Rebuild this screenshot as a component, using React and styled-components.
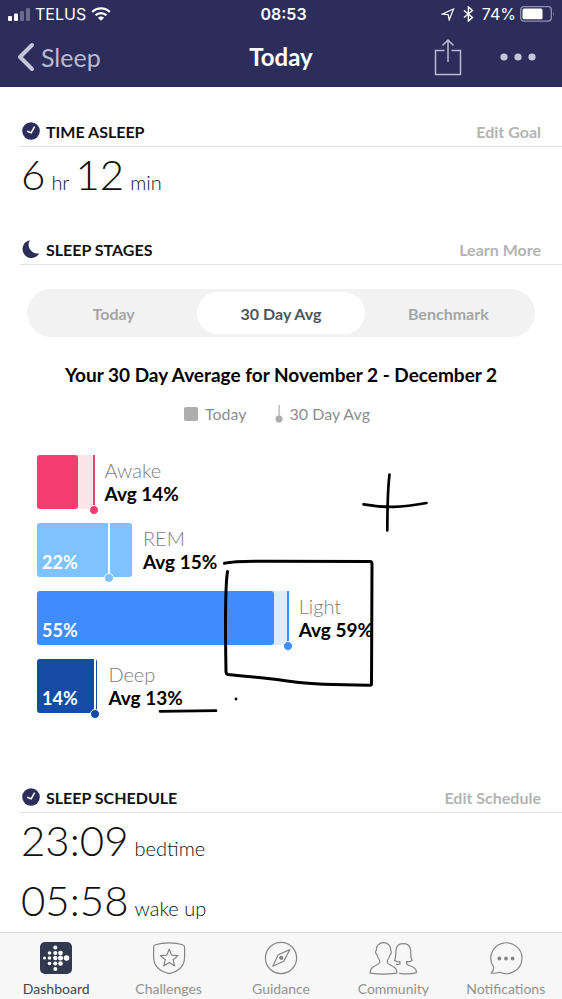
import React, { useState } from "react";
import styled, { createGlobalStyle } from "styled-components";

const stages = [
  { name: "Awake", today: 9.5, avg: 13.1, label: "", avgLabel: "Avg 14%", color: "#f23d6e", light: "#fde3ea" },
  { name: "REM", today: 22, avg: 16.6, label: "22%", avgLabel: "Avg 15%", color: "#7ec2ff", light: "#e2f1ff" },
  { name: "Light", today: 55, avg: 58.1, label: "55%", avgLabel: "Avg 59%", color: "#3f8cff", light: "#e1ebff" },
  { name: "Deep", today: 14, avg: 13.4, label: "14%", avgLabel: "Avg 13%", color: "#154aa6", light: "#dbe4f2" },
];

// share of the row that one percent of sleep takes
const SCALE = 0.884;

const tabs = ["Today", "30 Day Avg", "Benchmark"];

const ClockIcon = () => (
  <svg width="18" height="18" viewBox="0 0 18 18" aria-hidden="true">
    <circle cx="9" cy="9" r="8.8" fill="#2c2d5b" />
    <path d="M5 9.2 9.2 10.8 12.6 4.6" fill="none" stroke="#fff" strokeWidth="1.5" />
  </svg>
);

const MoonIcon = () => (
  <svg width="18" height="18" viewBox="0 0 18 18" aria-hidden="true">
    <path d="M8 .3A8.900 8.900 0 1 0 17.300 13.200 8.600 8.600 0 0 1 8 .3Z" fill="#2c2d5b" />
  </svg>
);

const DashboardIcon = () => (
  <svg width="48" height="34" viewBox="0 0 48 34" aria-hidden="true">
    <rect x="8" y="1" width="32" height="32" rx="5" fill="#30394d" />
    <g fill="#fff">
      <circle cx="12.500" cy="17" r="1.500" />
      <circle cx="17.500" cy="12" r="1.800" />
      <circle cx="17.500" cy="17" r="1.800" />
      <circle cx="17.500" cy="22.500" r="1.800" />
      <circle cx="23.300" cy="6.500" r="2" />
      <circle cx="23.300" cy="12" r="2.100" />
      <circle cx="23.300" cy="17" r="2.200" />
      <circle cx="23.300" cy="22.500" r="2.100" />
      <circle cx="23.300" cy="28" r="2" />
      <circle cx="28.500" cy="12" r="2.300" />
      <circle cx="28.500" cy="17" r="2.500" />
      <circle cx="28.500" cy="22.500" r="2.300" />
      <circle cx="34.500" cy="17" r="2.800" />
    </g>
  </svg>
);

const Outline = ({ children }) => (
  <svg
    width="48"
    height="34"
    viewBox="0 0 48 34"
    fill="none"
    stroke="#868686"
    strokeWidth="1.2"
    strokeLinejoin="round"
    strokeLinecap="round"
    aria-hidden="true"
  >
    {children}
  </svg>
);

const ChallengesIcon = () => (
  <Outline>
    <path d="M10.500 3.800C18 1.200 30 1.200 37.700 3.800 39 4.300 39.600 5.200 39.600 6.500V16C39.600 25 33 30.500 24.200 32.600 15.400 30.500 8.600 25 8.600 16V6.500C8.600 5.200 9.200 4.300 10.500 3.800Z" />
    <path d="M24.200 8.200 26.700 14.200 33 14.600 28.100 18.700 29.700 25 24.200 21.500 18.700 25 20.300 18.700 15.400 14.600 21.700 14.200Z" />
  </Outline>
);

const GuidanceIcon = () => (
  <Outline>
    <circle cx="24" cy="17" r="15.600" />
    <path d="M32.800 8.600 26.800 20.200 15.800 25.200 21.200 13.800Z" />
    <circle cx="24.200" cy="16.800" r="1.500" fill="#868686" />
  </Outline>
);

const CommunityIcon = () => (
  <Outline>
    <path d="M14.500 1.700C19 1.700 22 4.700 21.700 9.500 23 10 22.200 13.200 20.900 14 20.400 16.500 19.600 17.900 18.400 19.200V21.500C18.600 24.500 27.400 24.300 27.800 30.500V32.200C19 33.400 10 33.400 1.200 32.200V30.500C1.600 24.300 10.400 24.500 10.600 21.500V19.200C9.400 17.900 8.600 16.500 8.100 14 6.800 13.200 6 10 7.300 9.500 7 4.700 10 1.700 14.500 1.700Z" />
    <path d="M27.500 23.400C29 23.600 30.500 23.300 31 22.800V20.700C29 21 27 20.600 25.500 19.600 27.500 16 26.200 11 27.300 7.500 28.500 3.600 31 2.700 34.300 2.700S40.300 4 41.300 7.500C42.300 11 40.900 16 43 19.600 41.500 20.600 39.600 21 37.600 20.700V22.800C38.500 25 46.500 25 47.300 30V31.800C41.500 33.100 35.500 33 30.500 32.300" />
  </Outline>
);

const NotificationsIcon = () => (
  <Outline>
    <path d="M11.700 26.200A15.600 15.400 0 1 1 17.800 31.200C15.500 32.200 12.300 32.400 9.200 32.200 10.900 30.500 11.600 28.500 11.700 26.200Z" />
    <g fill="#868686" stroke="none">
      <circle cx="17.400" cy="17.500" r="1.900" />
      <circle cx="24" cy="17.500" r="1.900" />
      <circle cx="30.600" cy="17.500" r="1.900" />
    </g>
  </Outline>
);

const navItems = [
  { name: "Dashboard", Icon: DashboardIcon, active: true },
  { name: "Challenges", Icon: ChallengesIcon },
  { name: "Guidance", Icon: GuidanceIcon },
  { name: "Community", Icon: CommunityIcon },
  { name: "Notifications", Icon: NotificationsIcon },
];

const StatusBar = () => (
  <Status>
    <StatusGroup>
      <svg width="22" height="13" viewBox="0 0 22 13" fill="#fff" aria-hidden="true">
        <rect x="0" y="8" width="4" height="5" rx="1" />
        <rect x="6" y="5.500" width="4" height="7.500" rx="1" />
        <rect x="12" y="3" width="4" height="10" rx="1" opacity=".3" />
        <rect x="18" y="0" width="4" height="13" rx="1" opacity=".3" />
      </svg>
      TELUS
      <svg width="20" height="14" viewBox="0 0 20 14" fill="none" stroke="#fff" strokeWidth="2.300" aria-hidden="true">
        <path d="M1.200 5A12.400 12.400 0 0 1 18.800 5" />
        <path d="M4.500 8.300A7.800 7.800 0 0 1 15.500 8.300" />
        <path d="M10 13.800 6.900 10.700A4.400 4.400 0 0 1 13.100 10.700Z" fill="#fff" stroke="none" />
      </svg>
    </StatusGroup>
    <Time>08:53</Time>
    <StatusGroup $end>
      <svg width="14" height="13" viewBox="0 0 14 13" fill="none" stroke="#fff" strokeWidth="1.200" aria-hidden="true">
        <path d="M12.500 1 1.500 6 7.200 6.700 8.200 12Z" />
      </svg>
      <svg width="11" height="16" viewBox="0 0 11 16" fill="none" stroke="#fff" strokeWidth="1.400" aria-hidden="true">
        <path d="M1 4.500 9.500 11.500 5.400 15V1L9.500 4.500 1 11.500" />
      </svg>
      <Battery>
        74%
        <svg width="35" height="16" viewBox="0 0 35 16" aria-hidden="true">
          <rect x=".7" y=".7" width="30.600" height="14.400" rx="3" fill="none" stroke="#8f90ac" strokeWidth="1.300" />
          <rect x="2.500" y="2.500" width="20" height="10.800" rx="1.500" fill="#fff" />
          <path d="M33 5.500Q34.500 8 33 10.500Z" fill="#8f90ac" />
        </svg>
      </Battery>
    </StatusGroup>
  </Status>
);

const SectionHeader = ({ icon, title, action }) => (
  <SectionHead>
    {icon}
    <h2>{title}</h2>
    {action && <button type="button">{action}</button>}
  </SectionHead>
);

const StageRow = ({ stage }) => {
  const max = Math.max(stage.today, stage.avg);
  const over = stage.today > stage.avg;
  return (
    <Row>
      <Track $color={stage.light} style={{ width: `${max * SCALE}%` }}>
        <Fill $color={stage.color} style={{ width: `${(stage.today / max) * 100}%` }}>
          {stage.label}
        </Fill>
        <Marker
          $line={over ? "#fff" : stage.color}
          $dot={stage.color}
          style={{ left: `${(stage.avg / max) * 100}%` }}
        />
      </Track>
      <StageText>
        <span>{stage.name}</span>
        <strong>{stage.avgLabel}</strong>
      </StageText>
    </Row>
  );
};

const App = () => {
  const [tab, setTab] = useState("30 Day Avg");

  return (
    <Page>
      <GlobalStyle />
      <Header>
        <StatusBar />
        <NavBar>
          <BackButton type="button">
            <svg width="18" height="30" viewBox="0 0 18 30" fill="none" stroke="#c5c6dc" strokeWidth="4" strokeLinecap="round" strokeLinejoin="round" aria-hidden="true">
              <path d="M15 3 3 15 15 27" />
            </svg>
            Sleep
          </BackButton>
          <h1>Today</h1>
          <NavActions>
            <button type="button" aria-label="Share">
              <svg width="28" height="38" viewBox="0 0 28 38" fill="none" stroke="#b9bad3" strokeWidth="1.500" aria-hidden="true">
                <path d="M10.500 12.500H1.500V36.500H26.500V12.500H17.500M14 24V2M8.500 7.500 14 2 19.500 7.500" />
              </svg>
            </button>
            <button type="button" aria-label="More">
              <svg width="36" height="8" viewBox="0 0 36 8" fill="#c5c6dc" aria-hidden="true">
                <circle cx="4" cy="4" r="3.600" />
                <circle cx="18" cy="4" r="3.600" />
                <circle cx="32" cy="4" r="3.600" />
              </svg>
            </button>
          </NavActions>
        </NavBar>
      </Header>

      <Main>
        <Section>
          <SectionHeader icon={<ClockIcon />} title="TIME ASLEEP" action="Edit Goal" />
          <Value>
            <span>6</span>
            <small>hr</small>
            <span>12</span>
            <small>min</small>
          </Value>
        </Section>

        <Section>
          <SectionHeader icon={<MoonIcon />} title="SLEEP STAGES" action="Learn More" />
          <Tabs role="tablist">
            {tabs.map((name) => (
              <Tab
                key={name}
                type="button"
                role="tab"
                aria-selected={tab === name}
                $active={tab === name}
                onClick={() => setTab(name)}
              >
                {name}
              </Tab>
            ))}
          </Tabs>
          <ChartTitle>Your 30 Day Average for November 2 - December 2</ChartTitle>
          <Legend>
            <span>
              <Swatch />
              Today
            </span>
            <span>
              <svg width="8" height="18" viewBox="0 0 8 18" fill="#adadad" aria-hidden="true">
                <rect x="3.500" y="0" width="1.200" height="11" />
                <circle cx="4" cy="14" r="3.500" />
              </svg>
              30 Day Avg
            </span>
          </Legend>
          <Chart>
            {stages.map((stage) => (
              <StageRow key={stage.name} stage={stage} />
            ))}
            <Sketch
              width="562"
              height="270"
              viewBox="0 455 562 270"
              fill="none"
              stroke="#000"
              strokeWidth="2.700"
              strokeLinecap="round"
              strokeLinejoin="round"
              aria-hidden="true"
            >
              <path d="M389.500 474.500C387.300 492 387.500 512 387.300 530.500" />
              <path d="M363.500 504.300C385 507.800 400 508 426.500 503" />
              <path d="M224.500 563.300C234 561 250 561 272 561.300L370 561.500Q372 561.500 372 564L371.500 684.500Q371 685.500 369 685.300C346 685 314 684.500 297 682.300 275 679.200 260 677.500 228 674.500Q226 674 226 671.500C225.500 640 224.500 590 227.500 571.500" strokeWidth="3" />
              <path d="M160 711.300 216 710.700" />
              <circle cx="236" cy="699" r="1.400" fill="#000" stroke="none" />
            </Sketch>
          </Chart>
        </Section>

        <Section>
          <SectionHeader icon={<ClockIcon />} title="SLEEP SCHEDULE" action="Edit Schedule" />
          <Value>
            <span>23:09</span>
            <small>bedtime</small>
          </Value>
          <Value>
            <span>05:58</span>
            <small>wake up</small>
          </Value>
        </Section>
      </Main>

      <BottomNav>
        {navItems.map(({ name, Icon, active }) => (
          <NavItem key={name} href={`#${name.toLowerCase()}`} $active={active}>
            <Icon />
            {name}
          </NavItem>
        ))}
      </BottomNav>
    </Page>
  );
};

const GlobalStyle = createGlobalStyle`
  *, *::after {
    box-sizing: border-box;
  }
  body {
    margin: 0;
    background: #fff;
    color: #111;
    font-family: Lato, "Open Sans", sans-serif;
  }
  h1, h2, h3, p {
    margin: 0;
  }
  button {
    border: 0;
    padding: 0;
    background: none;
    font: inherit;
    color: inherit;
    cursor: pointer;
  }
  svg {
    display: block;
    flex-shrink: 0;
  }
`;

const Page = styled.div`
  display: flex;
  flex-direction: column;
  min-height: 100vh;
`;

const Header = styled.header`
  background: #2c2d5b;
  color: #fff;
`;

const Status = styled.div`
  display: grid;
  grid-template-columns: 1fr auto 1fr;
  align-items: center;
  height: 28px;
  padding: 0 7px 0 8px;
  font-family: Inter, sans-serif;
  font-size: 16px;
`;

const StatusGroup = styled.div`
  display: flex;
  align-items: center;
  gap: ${({ $end }) => ($end ? "8px" : "5px")};
  justify-content: ${({ $end }) => ($end ? "flex-end" : "flex-start")};
`;

const Battery = styled.span`
  display: flex;
  align-items: center;
  gap: 4px;
`;

const Time = styled.span`
  padding-left: 4px;
  font-weight: 600;
`;

const NavBar = styled.div`
  display: grid;
  grid-template-columns: 1fr auto 1fr;
  align-items: center;
  height: 59px;
  padding: 0 17px 2px;
  h1 {
    font-size: 24px;
    font-weight: bold;
  }
`;

const BackButton = styled.button`
  display: flex;
  align-items: center;
  justify-self: start;
  gap: 6px;
  && {
    color: #b9bad3;
    font-size: 25px;
  }
`;

const NavActions = styled.div`
  display: flex;
  align-items: center;
  justify-content: flex-end;
  gap: 38px;
  padding-right: 9px;
`;

const Main = styled.main`
  flex: 1;
  padding-top: 31px;
`;

const Section = styled.section`
  margin-bottom: 35px;
  &:last-child {
    margin-bottom: 0;
  }
`;

const SectionHead = styled.div`
  display: flex;
  align-items: center;
  gap: 6px;
  height: 29px;
  margin-left: 20px;
  padding: 0 21px 2px 2px;
  border-bottom: 1px solid #e2e2e2;
  h2 {
    font-size: 16px;
    font-weight: bold;
  }
  && button {
    margin-left: auto;
    color: #b4b4b4;
    font-size: 16px;
    font-weight: bold;
  }
`;

const Value = styled.p`
  display: flex;
  align-items: baseline;
  gap: 6px;
  padding: 0 21px;
  font-size: 42px;
  font-weight: 300;
  line-height: 54px;
  white-space: nowrap;
  small {
    font-size: 20px;
    line-height: 24px;
  }
  & + & {
    margin-top: 6px;
  }
`;

const Tabs = styled.div`
  display: flex;
  margin: 24px 27px 0;
  padding: 3px;
  border-radius: 24px;
  background: #f2f2f2;
`;

const Tab = styled.button`
  flex: 1;
  && {
    height: 42px;
    border-radius: 21px;
    background: ${({ $active }) => ($active ? "#fff" : "transparent")};
    color: ${({ $active }) => ($active ? "#4d565c" : "#a6a6a6")};
    font-size: 16px;
    font-weight: bold;
  }
`;

const ChartTitle = styled.h3`
  margin-top: 26px;
  font-size: 19px;
  font-weight: bold;
  line-height: 24px;
  text-align: center;
  color: #000;
`;

const Legend = styled.div`
  display: flex;
  justify-content: center;
  gap: 28px;
  margin-top: 17px;
  padding-right: 8px;
  color: #8e8e8e;
  font-size: 16px;
  line-height: 20px;
  span {
    display: flex;
    align-items: center;
    gap: 7px;
  }
`;

const Swatch = styled.i`
  width: 14px;
  height: 14px;
  border-radius: 2px;
  background: #adadad;
`;

const Chart = styled.div`
  position: relative;
  display: flex;
  flex-direction: column;
  gap: 14px;
  margin-top: 31px;
  padding: 0 37px 36px;
`;

const Row = styled.div`
  display: flex;
  align-items: center;
`;

const Track = styled.div`
  position: relative;
  height: 54px;
  border-radius: 2px;
  background: ${({ $color }) => $color};
`;

const Fill = styled.div`
  display: flex;
  align-items: flex-end;
  height: 100%;
  padding: 0 5px 4px;
  border-radius: 3px;
  background: ${({ $color }) => $color};
  color: #fff;
  font-size: 18px;
  font-weight: bold;
`;

const Marker = styled.i`
  position: absolute;
  top: 0;
  bottom: 0;
  width: 2px;
  margin-left: -1px;
  background: ${({ $line }) => $line};
  &::after {
    content: "";
    position: absolute;
    left: -4px;
    bottom: -6px;
    width: 10px;
    height: 10px;
    border: 1px solid #fff;
    border-radius: 50%;
    background: ${({ $dot }) => $dot};
  }
`;

const StageText = styled.p`
  display: flex;
  flex-direction: column;
  padding-left: 11px;
  font-size: 19px;
  line-height: 23px;
  white-space: nowrap;
  span {
    color: #7d7d7d;
    font-size: 20px;
    font-weight: 300;
  }
  strong {
    color: #000;
  }
`;

const Sketch = styled.svg`
  position: absolute;
  top: 0;
  left: 0;
  pointer-events: none;
`;

const BottomNav = styled.nav`
  display: grid;
  grid-template-columns: repeat(5, 1fr);
  height: 67px;
  border-top: 1px solid #d6d6d6;
  background: #f7f7f7;
`;

const NavItem = styled.a`
  display: flex;
  flex-direction: column;
  align-items: center;
  gap: 5px;
  padding-top: 8px;
  color: ${({ $active }) => ($active ? "#3f4650" : "#929292")};
  font-size: 14px;
  line-height: 18px;
  text-decoration: none;
`;

export default App;
